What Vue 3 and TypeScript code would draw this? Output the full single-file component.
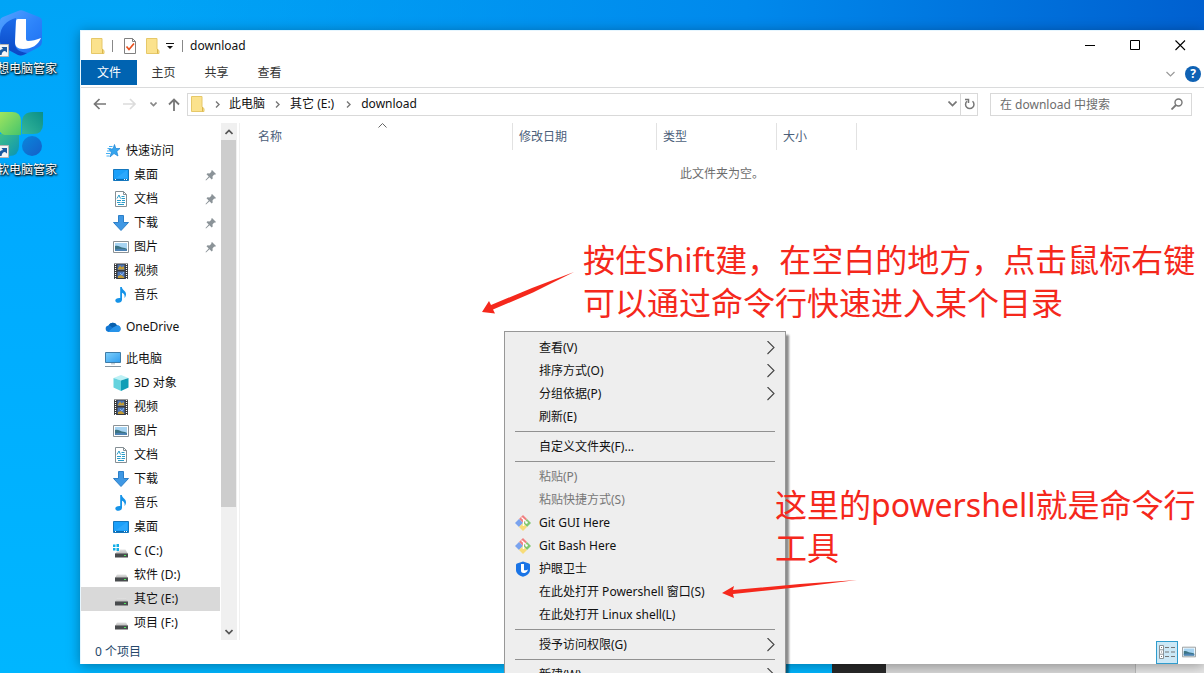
<script setup lang="ts">
import { ref } from 'vue'

interface NavItem {
  icon: string
  label: string
  level: number
  pinned?: boolean
  selected?: boolean
}
interface MenuItem {
  label?: string
  icon?: string
  arrow?: boolean
  disabled?: boolean
  separator?: boolean
}

const tabs: string[] = ['文件', '主页', '共享', '查看']
const crumbs: string[] = ['此电脑', '其它 (E:)', 'download']
const query = ref('')

const groups: NavItem[][] = [
  [
    { icon: 'star', label: '快速访问', level: 0 },
    { icon: 'desktop', label: '桌面', level: 1, pinned: true },
    { icon: 'doc', label: '文档', level: 1, pinned: true },
    { icon: 'down', label: '下载', level: 1, pinned: true },
    { icon: 'picture', label: '图片', level: 1, pinned: true },
    { icon: 'video', label: '视频', level: 1 },
    { icon: 'music', label: '音乐', level: 1 },
  ],
  [{ icon: 'cloud', label: 'OneDrive', level: 0 }],
  [
    { icon: 'pc', label: '此电脑', level: 0 },
    { icon: 'cube', label: '3D 对象', level: 1 },
    { icon: 'video', label: '视频', level: 1 },
    { icon: 'picture', label: '图片', level: 1 },
    { icon: 'doc', label: '文档', level: 1 },
    { icon: 'down', label: '下载', level: 1 },
    { icon: 'music', label: '音乐', level: 1 },
    { icon: 'desktop', label: '桌面', level: 1 },
    { icon: 'windrive', label: 'C (C:)', level: 1 },
    { icon: 'drive', label: '软件 (D:)', level: 1 },
    { icon: 'drive', label: '其它 (E:)', level: 1, selected: true },
    { icon: 'drive', label: '项目 (F:)', level: 1 },
  ],
]

const menu: MenuItem[] = [
  { label: '查看(V)', arrow: true },
  { label: '排序方式(O)', arrow: true },
  { label: '分组依据(P)', arrow: true },
  { label: '刷新(E)' },
  { separator: true },
  { label: '自定义文件夹(F)...' },
  { separator: true },
  { label: '粘贴(P)', disabled: true },
  { label: '粘贴快捷方式(S)', disabled: true },
  { label: 'Git GUI Here', icon: 'git' },
  { label: 'Git Bash Here', icon: 'git' },
  { label: '护眼卫士', icon: 'eyeguard' },
  { label: '在此处打开 Powershell 窗口(S)' },
  { label: '在此处打开 Linux shell(L)' },
  { separator: true },
  { label: '授予访问权限(G)', arrow: true },
  { separator: true },
  { label: '新建(W)', arrow: true },
]
</script>

<template>
  <div class="desktop">
    <svg class="defs" width="0" height="0" aria-hidden="true">
      <defs>
        <linearGradient id="gShield" x1="0" y1="0" x2="1" y2="1">
          <stop offset="0" stop-color="#56a4ff" />
          <stop offset="0.5" stop-color="#2f86fb" />
          <stop offset="1" stop-color="#1b6df0" />
        </linearGradient>
        <linearGradient id="gCrescent" x1="0" y1="0" x2="0" y2="1">
          <stop offset="0" stop-color="#1b6cea" />
          <stop offset="1" stop-color="#0a48c4" />
        </linearGradient>
        <linearGradient id="gLeafA" x1="0" y1="0" x2="1" y2="1">
          <stop offset="0" stop-color="#a2e65e" />
          <stop offset="1" stop-color="#45c46c" />
        </linearGradient>
        <linearGradient id="gLeafB" x1="1" y1="0" x2="0" y2="1">
          <stop offset="0" stop-color="#0b8f86" />
          <stop offset="1" stop-color="#35b79a" />
        </linearGradient>
        <linearGradient id="gLeafC" x1="0" y1="0" x2="1" y2="1">
          <stop offset="0" stop-color="#3fc088" />
          <stop offset="1" stop-color="#0b93b4" />
        </linearGradient>
        <linearGradient id="gBall" x1="0" y1="0" x2="1" y2="1">
          <stop offset="0" stop-color="#0a86dc" />
          <stop offset="1" stop-color="#155fc8" />
        </linearGradient>
        <linearGradient id="gScreen" x1="0" y1="0" x2="1" y2="1">
          <stop offset="0" stop-color="#7fd0fb" />
          <stop offset="1" stop-color="#2f9df0" />
        </linearGradient>
        <linearGradient id="gDrive" x1="0" y1="0" x2="0" y2="1">
          <stop offset="0" stop-color="#e2e2e2" />
          <stop offset="1" stop-color="#b5b5b5" />
        </linearGradient>
        <symbol id="folder" viewBox="0 0 16 18">
          <path d="M1.500 1.500h10.500v10.500l2 1.500v3h-12.500z" fill="#fbe28d" stroke="#e6c868" />
          <path d="M12.500 12v4.500" stroke="#d9b64e" />
        </symbol>
        <symbol id="checkdoc" viewBox="0 0 14 18">
          <path d="M1.500 1.500h8l3 3v12h-11z" fill="#fff" stroke="#808080" />
          <path d="M9.500 1.500v3h3" fill="none" stroke="#808080" />
          <path d="M3.500 9.500l2.500 3 5-6" fill="none" stroke="#e8501e" stroke-width="1.700" />
        </symbol>
        <symbol id="star" viewBox="0 0 16 16">
          <path d="M9.500 1.500l1.300 4h4.200l-3.200 2.900 1.200 4.600-4-2.500-4 3.500 1.300-4.800L4 6.500l4-.8z" fill="#35a5ee" stroke="#1d83d4" stroke-width=".7" />
          <path d="M4 3.500h3.500M2.500 5.500H6M2 8h3M1 10.500h4M1.500 13h3" stroke="#44aff3" />
        </symbol>
        <symbol id="desktop" viewBox="0 0 16 16">
          <path d="M.5 2.500h15v11H.5z" fill="#1ba0fa" stroke="#1476bd" />
          <path d="M1 12.500h14" stroke="#0b6ab0" />
          <path d="M2 12.500h1M11 12.500h1M13 12.500h1" stroke="#fff" />
          <path d="M3 11L14 3v8z" fill="#3db0ff" opacity=".5" />
        </symbol>
        <symbol id="doc" viewBox="0 0 16 16">
          <path d="M2.500.5h8l3 3v12h-11z" fill="#fff" stroke="#858f94" />
          <path d="M10.500.5v3h3" fill="none" stroke="#858f94" />
          <path d="M4 7.500L6 4l1.500 3.500M8.500 5.500h3M8.500 7.500H12M4 9.500h4M9 9.500h3M4 11.500h3.500M8.500 11.500H12M5 13.500h6" stroke="#2a9cc9" fill="none" />
        </symbol>
        <symbol id="down" viewBox="0 0 16 16">
          <path d="M5.500.5h5v7h5L8 15.500.5 7.500h5z" fill="#3f98e4" stroke="#2c7fc8" />
        </symbol>
        <symbol id="picture" viewBox="0 0 16 16">
          <path d="M.5 2.500h15v11H.5z" fill="#fff" stroke="#8b9296" />
          <path d="M2 4h12v8H2z" fill="#a7d4f2" />
          <path d="M2 7c3-1 5 1 7 1.500s4 .5 5 1.500v2H2z" fill="#3c7484" />
          <path d="M2 10.500c4-1.500 8 0 12 0V12H2z" fill="#4d83b5" />
        </symbol>
        <symbol id="video" viewBox="0 0 16 16">
          <path d="M1 .5h14V16H1z" fill="#38393b" />
          <path d="M2.500 1v15M13.500 1v15" stroke="#fff" stroke-width="1.200" stroke-dasharray="1 1" />
          <path d="M4.500 1.500h7V7h-7zM4.500 8.500h7V15h-7z" fill="#4c76b7" />
          <path d="M5 5.500l2-3 1.500 2 2-1.500 1 3.500H5zM5 13l3-1 3 2v1H5z" fill="#c59c33" />
          <path d="M7 10l2 2 2-3" stroke="#8bb4ef" fill="none" />
        </symbol>
        <symbol id="music" viewBox="0 0 16 16">
          <path d="M7.200 0h1.600c.3 3 4.200 3.800 4.200 7.300 0 1.500-.6 2.700-1.500 3.700.6-3-.5-4.500-2.500-5.300v7.100c0 1.900-1.800 3-3.500 3S2.300 15 2.300 13.500 4 10.800 7.200 11z" fill="#1593e8" />
        </symbol>
        <symbol id="cloud" viewBox="0 0 16 16">
          <path d="M3.500 13a3.300 3.300 0 0 1-.2-6.500A5 5 0 0 1 12 6.300 3.400 3.400 0 0 1 12.800 13z" fill="#1277d3" />
          <path d="M4 6a4.600 4.600 0 0 1 8 .4L8 9z" fill="#0960ad" />
          <path d="M3 13l5-4.500 3.500-1.800c3-.5 4.500 1.500 4.200 3.600C15.500 12 14.300 13 12.800 13z" fill="#2793e9" />
        </symbol>
        <symbol id="pc" viewBox="0 0 16 16">
          <path d="M.5 1.500h15v10H.5z" fill="url(#gScreen)" stroke="#3e7ca8" />
          <path d="M6 12h4v1.500H6z" fill="#c7d0d6" />
          <path d="M0 15.500h16" stroke="#8695a0" />
        </symbol>
        <symbol id="cube" viewBox="0 0 16 16">
          <path d="M8 0l7.500 3L8 5.500.5 3z" fill="#bdf1f5" />
          <path d="M.5 3L8 5.500V16L.5 12.500z" fill="#65d3de" />
          <path d="M8 5.500L15.500 3v9.500L8 16z" fill="#119eb6" />
        </symbol>
        <symbol id="drive" viewBox="0 0 16 16">
          <path d="M4 7.500h9L15 11H2z" fill="url(#gDrive)" />
          <path d="M2 10.500h13v4H2z" fill="#484b4d" />
          <path d="M11 12h2v1h-2z" fill="#4dea5c" />
        </symbol>
        <symbol id="windrive" viewBox="0 0 16 16">
          <path d="M0 1.500h2.500V4H0zM3.500 1H6v3H3.500zM0 5h2.500v2.500H0zM3.500 5H6v3H3.500z" fill="#12aee6" />
          <path d="M6.500 6.500h6L15 11H2l2-2.500h2.500z" fill="url(#gDrive)" />
          <path d="M2 10.500h13v4H2z" fill="#484b4d" />
          <path d="M11 12h2v1h-2z" fill="#4dea5c" />
        </symbol>
        <symbol id="pin" viewBox="0 0 12 12">
          <path d="M7 1l4 4-1 .8-.8-.2L7.500 7.500l.2 2-1 1L4.500 8.300 1 11.500l-.5-.5 3.200-3.500L1.500 5.300l1-1 2 .2L6.400 2.800 6.200 2z" fill="#8b9398" />
        </symbol>
        <symbol id="git" viewBox="0 0 16 16">
          <path d="M8 0l4 4-4 4-4-4z" fill="#f08080" />
          <path d="M4 4l4 4-4 4-4-4z" fill="#7aa3ee" />
          <path d="M12 4l4 4-4 4-4-4z" fill="#80c66f" />
          <path d="M8 8l4 4-4 4-4-4z" fill="#f7dc79" />
          <path d="M6.500 2.500l4.500 4M8.500 4.500v5" stroke="#fff" stroke-width="1.100" />
          <circle cx="8.500" cy="10" r="1" fill="#fff" />
          <circle cx="11.500" cy="7.500" r="1.200" fill="#fff" />
        </symbol>
        <symbol id="shield" viewBox="0 0 44 46">
          <path d="M19 1q3-1.500 6 0l15 6q3 1 3 4v21q0 3-3 5L25 45q-3 1.500-6 0L4 37q-3-2-3-5V11q0-3 3-4z" fill="url(#gShield)" />
          <path d="M17 8C8 10 1 17 1 27v5q0 3 3 5l15 8c3 1 6 0 9-2-8-1-12-4-12-10z" fill="url(#gCrescent)" />
          <path d="M17 11q0-2 2-2h8v20q0 2 2 2c4 0 8-1 13-3-3 7-9 11-18 11-6 0-8-3-8-7z" fill="#fff" />
        </symbol>
        <symbol id="eyeguard" viewBox="0 0 16 16">
          <path d="M8 .5l6 2q1 .3 1 1.500v5c0 3.500-3 5.500-7 6.800C4 14.500 1 12.500 1 9V4q0-1.200 1-1.500z" fill="#1a74e6" />
          <path d="M6 3h3v6.200c1.500 0 2.800-.2 4-.8-.8 2.600-2.500 3.600-4.500 3.600S6 11 6 9.500z" fill="#fff" />
        </symbol>
        <symbol id="shortcut" viewBox="0 0 13 13">
          <path d="M.5.5h12v12H.5z" fill="#f5f5f5" stroke="#b4b4b4" />
          <path d="M3 11c0-4 1-5.500 4-6L5.500 3H11v5.500L9 7c-2 0-3 1.500-3.500 4z" fill="#1b5aa0" />
        </symbol>
      </defs>
    </svg>

    <div class="taskstrip"><span class="dark"></span><span class="mid"></span><span class="light"></span></div>

    <div class="shortcuts">
      <a href="#" class="app">
        <svg class="applogo" viewBox="0 0 44 46"><use href="#shield" /></svg>
        <svg class="badge"><use href="#shortcut" /></svg>
        <span>联想电脑管家</span>
      </a>
      <a href="#" class="app">
        <svg class="applogo" viewBox="0 0 44 46">
          <path d="M0 23h20v12q0 10-10 10H0z" fill="url(#gLeafC)" />
          <path d="M44 1v12q0 10-10 10H23V12Q23 1 34 1z" fill="url(#gLeafB)" />
          <path d="M0 1h13q9 0 9 9v14H8Q0 24 0 16z" fill="url(#gLeafA)" />
          <circle cx="33" cy="35" r="10" fill="url(#gBall)" />
        </svg>
        <svg class="badge"><use href="#shortcut" /></svg>
        <span>微软电脑管家</span>
      </a>
    </div>

    <main class="window">
      <header class="titlebar">
        <svg class="i-folder"><use href="#folder" /></svg>
        <i class="bar"></i>
        <button class="plain" aria-label="属性"><svg class="i-check"><use href="#checkdoc" /></svg></button>
        <button class="plain" aria-label="新建文件夹"><svg class="i-folder"><use href="#folder" /></svg></button>
        <button class="plain caret" aria-label="自定义快速访问工具栏">
          <svg width="8" height="8" viewBox="0 0 8 8"><path d="M0 1.500h8" stroke="#111" /><path d="M1 4h6L4 7z" fill="#111" /></svg>
        </button>
        <i class="bar"></i>
        <h1>download</h1>
        <div class="winbtns">
          <button class="plain" aria-label="最小化"><svg width="11" height="11" viewBox="0 0 11 11"><path d="M0 5.500h10" stroke="#000" /></svg></button>
          <button class="plain" aria-label="最大化"><svg width="11" height="11" viewBox="0 0 11 11"><path d="M.5.500h9v9H.5z" fill="none" stroke="#000" /></svg></button>
          <button class="plain" aria-label="关闭"><svg width="11" height="11" viewBox="0 0 11 11"><path d="M.5.500l9.500 9.500M10 .500l-9.500 9.500" stroke="#000" stroke-width="1.100" /></svg></button>
        </div>
      </header>

      <nav class="ribbon">
        <button v-for="(t, i) in tabs" :key="t" class="plain tab" :class="{ file: i === 0 }">{{ t }}</button>
        <button class="plain expand" aria-label="展开功能区"><svg width="9" height="6" viewBox="0 0 9 6"><path d="M.5 1l4 4 4-4" fill="none" stroke="#9a9a9a" stroke-width="1.200" /></svg></button>
        <button class="help" aria-label="帮助">?</button>
      </nav>

      <div class="address">
        <div class="arrows">
          <button class="plain" aria-label="后退"><svg width="14" height="12" viewBox="0 0 14 12"><path d="M13 6H1.500M6.500 1l-5 5 5 5" fill="none" stroke="#777" stroke-width="1.700" /></svg></button>
          <button class="plain" aria-label="前进"><svg width="14" height="12" viewBox="0 0 14 12"><path d="M0 6h11.500M7 1l5 5-5 5" fill="none" stroke="#dcdcdc" stroke-width="1.700" /></svg></button>
          <button class="plain" aria-label="最近位置"><svg width="7" height="5" viewBox="0 0 7 5"><path d="M.5.500l3 3 3-3" fill="none" stroke="#888" stroke-width="1.600" /></svg></button>
          <button class="plain" aria-label="向上"><svg width="12" height="13" viewBox="0 0 12 13"><path d="M6 13V1.500M1 6.500l5-5 5 5" fill="none" stroke="#777" stroke-width="1.800" /></svg></button>
        </div>
        <div class="path">
          <svg class="i-folder"><use href="#folder" /></svg>
          <template v-for="c in crumbs" :key="c">
            <svg class="sep" width="5" height="7" viewBox="0 0 5 7"><path d="M1 .5l3 3-3 3" fill="none" stroke="#777" stroke-width="1.400" /></svg>
            <a href="#">{{ c }}</a>
          </template>
          <span class="grow"></span>
          <button class="plain drop" aria-label="历史记录"><svg width="9" height="6" viewBox="0 0 9 6"><path d="M.5.500l4 4 4-4" fill="none" stroke="#777" stroke-width="1.700" /></svg></button>
          <button class="plain refresh" aria-label="刷新">
            <svg width="11" height="12" viewBox="0 0 11 12"><path d="M8.500 3.200A4.200 4.200 0 1 1 3 3.200M1 1.500h3.500V5" fill="none" stroke="#777" stroke-width="1.500" /></svg>
          </button>
        </div>
        <label class="search">
          <input v-model="query" type="text" placeholder="在 download 中搜索" aria-label="搜索" />
          <svg width="12" height="12" viewBox="0 0 12 12"><circle cx="7.500" cy="4.500" r="3.500" fill="none" stroke="#777" stroke-width="1.400" /><path d="M5 7l-4.500 4.500" stroke="#777" stroke-width="1.800" /></svg>
        </label>
      </div>

      <div class="body">
        <aside class="tree">
          <ul v-for="(g, gi) in groups" :key="gi">
            <li v-for="n in g" :key="n.label">
              <a href="#" :class="{ child: n.level === 1, selected: n.selected }">
                <svg class="i16"><use :href="'#' + n.icon" /></svg>
                <span>{{ n.label }}</span>
                <svg v-if="n.pinned" class="pin"><use href="#pin" /></svg>
              </a>
            </li>
          </ul>
        </aside>
        <div class="scroll">
          <button class="plain" aria-label="向上滚动"><svg width="8" height="6" viewBox="0 0 8 6"><path d="M.5 5L4 1.500 7.500 5" fill="none" stroke="#555" stroke-width="1.700" /></svg></button>
          <div class="track"><div class="thumb"></div></div>
          <button class="plain" aria-label="向下滚动"><svg width="8" height="6" viewBox="0 0 8 6"><path d="M.5 1L4 4.500 7.500 1" fill="none" stroke="#555" stroke-width="1.700" /></svg></button>
        </div>
        <section class="files">
          <table>
            <thead>
              <tr>
                <th class="c1">名称<svg class="sort" width="9" height="5" viewBox="0 0 9 5"><path d="M.5 4.500l4-4 4 4" fill="none" stroke="#666" /></svg></th>
                <th class="c2">修改日期</th>
                <th class="c3">类型</th>
                <th class="c4">大小</th>
              </tr>
            </thead>
          </table>
          <p>此文件夹为空。</p>
        </section>
      </div>

      <footer class="status">
        <span>0 个项目</span>
        <div class="views">
          <button class="plain view on" aria-label="详细信息">
            <svg width="17" height="14" viewBox="0 0 17 14"><path d="M.5.500h4v13h-4zM.5 4.800h4M.5 9.200h4" fill="#fff" stroke="#8b9296" /><path d="M2 2.500h1M2 7h1M2 11.500h1M6 2.500h4M12 2.500h4M6 7h4M12 7h4M6 11.500h4M12 11.500h4" stroke="#777" /></svg>
          </button>
          <button class="plain view" aria-label="大图标"><svg class="i14"><use href="#picture" /></svg></button>
        </div>
      </footer>
    </main>

    <div class="menu" role="menu">
      <template v-for="(m, i) in menu" :key="i">
        <hr v-if="m.separator" />
        <button v-else role="menuitem" :disabled="m.disabled">
          <span class="mi"><svg v-if="m.icon" class="i16"><use :href="'#' + m.icon" /></svg></span>
          <span>{{ m.label }}</span>
          <svg v-if="m.arrow" class="sub" width="8" height="14" viewBox="0 0 8 14"><path d="M.5 0L7 6.500.5 13" fill="none" stroke="#444" stroke-width="1.100" /></svg>
        </button>
      </template>
    </div>

    <p class="note first">按住Shift建，在空白的地方，点击鼠标右键<br />可以通过命令行快速进入某个目录</p>
    <p class="note second">这里的powershell就是命令行工具</p>
    <svg class="arrow a1" viewBox="0 0 94 46"><path d="M92 1L50 17 9 34 7 30 0 41l13 1.500-2-4 40-17z" fill="#f5281c" /></svg>
    <svg class="arrow a2" viewBox="0 0 136 20"><path d="M135 0L78 4 11 10l1-4L0 13l12 5-1-4 67-7z" fill="#f5281c" /></svg>
  </div>
</template>

<style>
body {
  margin: 0;
}
</style>

<style scoped>
* {
  box-sizing: border-box;
}
.desktop {
  position: relative;
  height: 100vh;
  overflow: hidden;
  background:
    linear-gradient(90deg, transparent 12%, #0089ec 62%, #0060d0 100%) top / 100% 60px no-repeat,
    linear-gradient(180deg, #00a4f6 0%, #00aaff 30%, #00b6ff 100%);
  font: 12px/16px 'Noto Sans', 'Noto Sans CJK SC', sans-serif;
  color: #111;
}
.defs {
  position: absolute;
}
a {
  color: inherit;
  text-decoration: none;
}
button {
  font: inherit;
  color: inherit;
}
.plain {
  display: flex;
  align-items: center;
  justify-content: center;
  border: 0;
  padding: 0;
  background: none;
}
.taskstrip {
  position: absolute;
  left: 832px;
  right: 0;
  bottom: 0;
  height: 12px;
  display: flex;
}
.dark {
  width: 54px;
  background: #292929;
}
.mid {
  flex: 1;
  background: #d8d8d8;
}
.light {
  width: 69px;
  border-left: 1px solid #bbb;
  background: #e8e8e8;
}
.shortcuts {
  position: absolute;
  left: -16px;
  top: 10px;
  display: flex;
  flex-direction: column;
  gap: 24px;
}
.app {
  position: relative;
  display: flex;
  flex-direction: column;
  gap: 5px;
  width: 76px;
  padding-left: 1px;
  color: #fff;
  text-shadow: 1px 1px 2px #000, 0 1px 2px #000;
  white-space: nowrap;
}
.app span {
  height: 26px;
}
.applogo {
  width: 44px;
  height: 46px;
  margin-left: 14px;
}
.badge {
  position: absolute;
  left: 12px;
  top: 34px;
  width: 13px;
  height: 13px;
}
.window {
  position: absolute;
  inset: 30px 0 9px 80px;
  display: flex;
  flex-direction: column;
  border: 1px solid #e6f6ff;
  border-width: 1px 0 0 1px;
  background: #fff;
  box-shadow: 0 2px 12px rgba(0, 0, 0, 0.35);
}
.titlebar {
  display: flex;
  align-items: center;
  height: 29px;
  padding-left: 9px;
}
.i-folder {
  width: 16px;
  height: 18px;
}
.i-check {
  width: 14px;
  height: 18px;
  margin: 0 8px 0 7px;
}
.bar {
  width: 1px;
  height: 12px;
  margin: 0 3px 0 6px;
  background: #888;
}
.caret {
  width: 16px;
  margin-left: 1px;
}
.caret + .bar {
  margin-left: 4px;
}
.titlebar h1 {
  margin: 0 0 0 4px;
  font-size: 12px;
  font-weight: 400;
}
.winbtns {
  display: flex;
  margin-left: auto;
  padding-right: 1px;
}
.winbtns button {
  width: 45px;
  height: 29px;
}
.ribbon {
  display: flex;
  height: 28px;
  border-bottom: 1px solid #dadbdc;
  color: #333;
}
.tab {
  width: 53px;
  height: 25px;
  padding-top: 1px;
}
.tab.file {
  width: 56px;
  background: #0063b1;
  color: #fff;
}
.expand {
  width: 20px;
  height: 27px;
  margin-left: auto;
}
.help {
  width: 16px;
  height: 16px;
  margin: 6px 3px 0 5px;
  padding: 0;
  border: 0;
  border-radius: 50%;
  background: #0f62b4;
  color: #fff;
  font-weight: 700;
  line-height: 16px;
}
.address {
  display: flex;
  align-items: center;
  height: 32px;
  padding-right: 12px;
}
.arrows {
  display: flex;
  align-items: center;
  gap: 16px;
  width: 106px;
  padding-left: 12px;
}
.arrows button:nth-child(3) {
  margin-left: -3px;
}
.arrows button:nth-child(4) {
  margin-left: -5px;
}
.path {
  flex: 1;
  display: flex;
  align-items: center;
  height: 23px;
  padding-left: 2px;
  border: 1px solid #d9d9d9;
}
.sep {
  margin: 0 9px;
}
.sep ~ .sep {
  margin: 0 10px;
}
.sep ~ .sep ~ .sep {
  margin: 0 10px 0 12px;
}
.grow {
  flex: 1;
}
.drop {
  width: 16px;
}
.refresh {
  width: 17px;
  height: 21px;
  border-left: 1px solid #d9d9d9;
}
.search {
  display: flex;
  align-items: center;
  width: 202px;
  height: 23px;
  margin-left: 12px;
  padding: 0 8px 0 9px;
  border: 1px solid #d9d9d9;
}
.search input {
  flex: 1;
  min-width: 0;
  padding: 1px 0 0;
  border: 0;
  outline: 0;
  background: none;
  font: inherit;
}
.search input::placeholder {
  color: #6d6d6d;
  opacity: 1;
}
.body {
  flex: 1;
  display: flex;
  min-height: 0;
  padding-top: 3px;
}
.tree {
  width: 140px;
  padding-top: 16px;
  overflow: hidden;
}
ul {
  margin: 0 0 8px;
  padding: 0;
  list-style: none;
}
.tree a {
  display: flex;
  align-items: center;
  gap: 5px;
  height: 24px;
  width: 139px;
  padding: 0 3px 0 24px;
}
.tree a.child {
  padding-left: 32px;
}
.tree a.selected {
  background: #d9d9d9;
}
.i16 {
  flex: none;
  width: 16px;
  height: 16px;
}
.i14 {
  width: 14px;
  height: 14px;
}
.pin {
  width: 12px;
  height: 12px;
  margin-left: auto;
}
.scroll {
  display: flex;
  flex-direction: column;
  width: 16px;
  background: #f0f0f0;
}
.scroll button {
  width: 15px;
  height: 17px;
}
.track {
  flex: 1;
}
.thumb {
  width: 15px;
  height: 76%;
  background: #cdcdcd;
}
.files {
  flex: 1;
  margin-left: 2px;
  border-left: 1px solid #f0f0f0;
}
table {
  border-collapse: separate;
  border-spacing: 0;
  table-layout: fixed;
  width: 617px;
}
th {
  position: relative;
  height: 27px;
  padding: 0 0 0 6px;
  border-right: 1px solid #e2e2e2;
  font-weight: 400;
  text-align: left;
  color: #4c607a;
}
.c1 {
  width: 273px;
  padding-left: 18px;
}
.c2 {
  width: 144px;
}
.c3 {
  width: 120px;
}
.c4 {
  width: 80px;
}
.sort {
  position: absolute;
  left: 138px;
  top: 0;
}
.files p {
  margin: 16px 0 0;
  text-align: center;
  color: #6d6d6d;
}
.status {
  display: flex;
  align-items: center;
  height: 24px;
  padding-left: 14px;
  color: #26486b;
}
.views {
  display: flex;
  margin-left: auto;
  padding-right: 4px;
}
.view {
  width: 22px;
  height: 23px;
  border: 1px solid transparent;
}
.view.on {
  border-color: #2f9ccd;
  background: #cce8f6;
}
.menu {
  position: absolute;
  left: 504px;
  top: 331px;
  width: 282px;
  padding: 4px 2px;
  border: 1px solid #979797;
  background: #eee;
  box-shadow: 3px 4px 2px rgba(0, 0, 0, 0.45);
}
.menu button {
  display: flex;
  align-items: center;
  width: 100%;
  height: 23px;
  padding: 0 8px;
  border: 0;
  background: none;
  text-align: left;
}
.menu button:disabled {
  color: #777;
}
.mi {
  width: 24px;
  height: 16px;
}
.sub {
  margin-left: auto;
}
hr {
  height: 1px;
  margin: 3px 8px;
  border: 0;
  background: #919191;
}
.note {
  position: absolute;
  margin: 0;
  font-size: 32px;
  line-height: 43px;
  color: #f5281c;
}
.first {
  left: 583px;
  top: 238px;
  white-space: nowrap;
}
.second {
  left: 775px;
  top: 483px;
  width: 428px;
}
.arrow {
  position: absolute;
}
.a1 {
  left: 482px;
  top: 271px;
  width: 94px;
  height: 46px;
}
.a2 {
  left: 722px;
  top: 580px;
  width: 136px;
  height: 20px;
}
</style>
